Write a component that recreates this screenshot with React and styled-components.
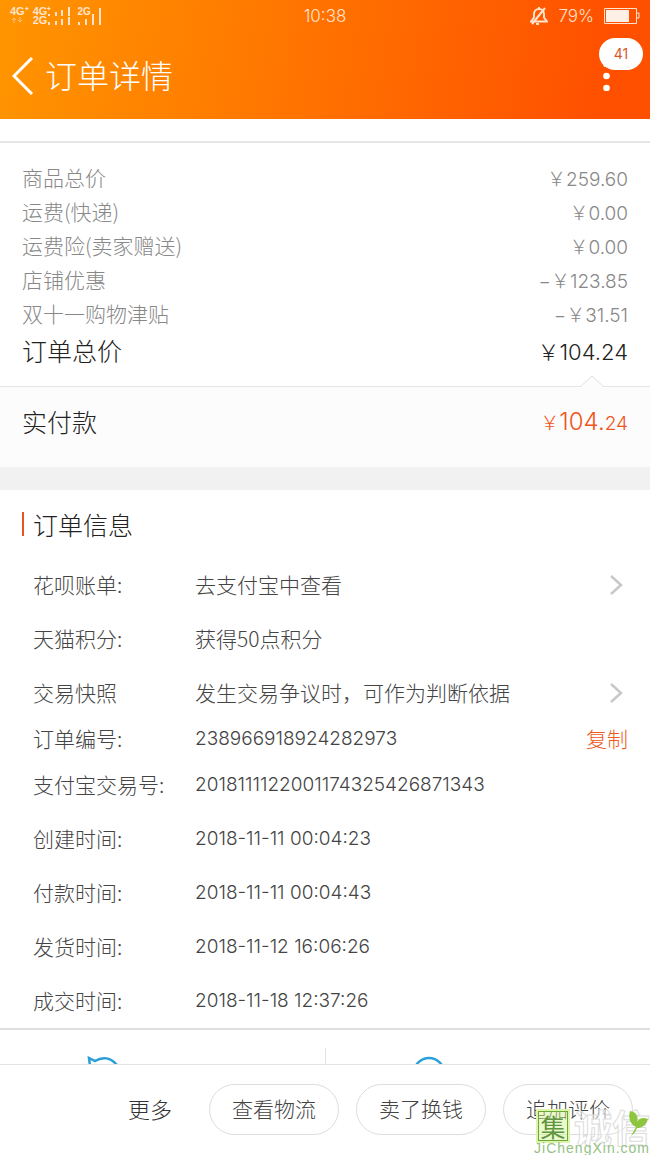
import React from "react";
import styled, { createGlobalStyle } from "styled-components";

const GlobalStyle = createGlobalStyle`
  body {
    margin: 0;
    background-color: #fff;
    font-family: "Noto Sans CJK SC", "Noto Sans", sans-serif;
    font-weight: 300;
    color: #444;
  }
  button {
    font-family: inherit;
    font-weight: inherit;
    cursor: pointer;
  }
`;

const digits = `Inter, "Noto Sans CJK SC", sans-serif`;

const Page = styled.div`
  display: flex;
  flex-direction: column;
  min-height: 100vh;
`;

const Header = styled.header`
  color: #fff;
  background: linear-gradient(100deg, #ff9500 0%, #ff7a00 38%, #ff5000 92%);
`;

const StatusBar = styled.div`
  display: grid;
  grid-template-columns: 1fr auto 1fr;
  align-items: center;
  height: 32px;
  padding: 0 10px;
  font-family: ${digits};
  font-size: 17px;
  line-height: 20px;
  color: #ffe3cc;
`;

const Signals = styled.div`
  display: flex;
  align-items: center;
  gap: 4px;
  font-family: "Liberation Sans", sans-serif;
  font-size: 11px;
  font-weight: 700;
  line-height: 9px;
`;

const SignalLabel = styled.span`
  display: flex;
  flex-direction: column;
  height: 18px;
  font-size: ${(props) => (props.$small ? "10px" : "11px")};
`;

const SignalBars = styled.svg`
  margin-left: ${(props) => (props.$underLabel ? "-18px" : "-8px")};
`;

const StatusRight = styled.div`
  display: flex;
  align-items: center;
  justify-content: flex-end;
  gap: 10px;
`;

const NavBar = styled.div`
  display: flex;
  align-items: center;
  height: 87px;
  padding: 0 12px;
`;

const IconButton = styled.button`
  display: flex;
  padding: 0;
  border: none;
  background: none;
  color: inherit;
`;

const PageTitle = styled.h1`
  flex: 1;
  margin: 0 0 0 11px;
  padding-bottom: 4px;
  font-size: 32px;
  font-weight: 300;
  line-height: 40px;
`;

const MoreWrapper = styled.div`
  position: relative;
  margin-right: 28px;
`;

const Badge = styled.span`
  position: absolute;
  left: -4px;
  bottom: 21px;
  width: 44px;
  border-radius: 16px;
  background-color: #fff;
  color: #d9582b;
  font-family: ${digits};
  font-size: 14px;
  font-weight: 400;
  line-height: 32px;
  text-align: center;
`;

const Summary = styled.section`
  margin-top: 22px;
  padding: 17px 22px 16px;
  border-top: 2px solid #e6e6e6;
`;

const SummaryRow = styled.div`
  display: flex;
  align-items: center;
  justify-content: space-between;
  height: ${(props) => (props.$total ? "40px" : "34px")};
  font-size: ${(props) => (props.$total ? "25px" : "21px")};
  color: ${(props) => (props.$total ? "#222" : "#888")};
`;

const Amount = styled.span`
  font-family: ${digits};
  font-size: ${(props) => (props.$total ? "22px" : "19px")};
`;

const Payment = styled.section`
  position: relative;
  display: flex;
  align-items: center;
  justify-content: space-between;
  height: 68px;
  padding: 0 22px 12px;
  border-top: 1px solid #e6e6e6;
  background-color: #fcfcfc;
  font-size: 25px;
  color: #222;
`;

const Caret = styled.svg`
  position: absolute;
  top: -12px;
  right: 46px;
`;

const PaidAmount = styled.span`
  font-family: ${digits};
  font-size: 19px;
  color: #f0551d;
`;

const PaidInteger = styled.span`
  font-size: 24px;
`;

const Info = styled.section`
  border-top: 23px solid #f1f1f1;
  border-bottom: 2px solid #dedede;
`;

const InfoTitle = styled.h2`
  display: flex;
  align-items: center;
  height: 68px;
  margin: 0;
  padding: 0 22px;
  font-size: 25px;
  font-weight: 300;
  line-height: 24px;
  color: #222;
`;

const InfoTitleText = styled.span`
  padding-left: 9px;
  border-left: 2px solid #e8541e;
`;

const InfoRow = styled.div`
  display: grid;
  grid-template-columns: 162px 1fr auto;
  align-items: center;
  box-sizing: border-box;
  height: ${(props) => (props.$compact ? "38px" : "54px")};
  padding: 0 22px 2px 33px;
  font-size: 21px;
`;

const InfoValue = styled.span`
  font-family: ${(props) => (props.$numeric ? digits : "inherit")};
  font-size: ${(props) => (props.$numeric ? "19px" : "21px")};
`;

const LinkButton = styled(IconButton)`
  margin-right: 5px;
  padding-top: 2px;
  color: #c8c8c8;
`;

const CopyButton = styled(IconButton)`
  font-size: 21px;
  color: #ee5a1c;
`;

const Contacts = styled.section`
  display: grid;
  grid-template-columns: 1fr 1fr;
  height: 34px;
  overflow: hidden;
`;

const Contact = styled.div`
  display: flex;
  padding: 26px 0 0 87px;
`;

const ContactRight = styled(Contact)`
  margin-top: 18px;
  padding-top: 8px;
  border-left: 1px solid #e3e3e3;
`;

const Footer = styled.footer`
  position: relative;
  display: flex;
  align-items: center;
  justify-content: flex-end;
  gap: 17px;
  height: 88px;
  padding: 0 17px 2px;
  border-top: 1px solid #e3e3e3;
`;

const MoreButton = styled(IconButton)`
  margin-right: 20px;
  padding-bottom: 3px;
  font-size: 22px;
  color: #333;
`;

const PillButton = styled.button`
  width: 130px;
  height: 51px;
  padding: 0 0 3px;
  border: 1px solid #ddd;
  border-radius: 26px;
  background-color: #fff;
  font-size: 21px;
  color: #444;
`;

const Watermark = styled.div`
  position: absolute;
  right: 0;
  bottom: 0;
  display: flex;
  flex-direction: column;
  align-items: flex-end;
  pointer-events: none;
`;

const WatermarkMarks = styled.div`
  display: flex;
  align-items: center;
  gap: 6px;
  font-size: 38px;
  line-height: 30px;
  color: rgba(255, 255, 255, 0.5);
  font-weight: 700;
  -webkit-text-stroke: 1px #dcdcdc;
`;

const WatermarkSeal = styled.span`
  width: 28px;
  border: 1px solid #6fa53c;
  outline: 2px solid #dcf5a8;
  background-color: rgba(214, 243, 150, 0.5);
  font-size: 25px;
  font-weight: 400;
  line-height: 28px;
  text-align: center;
  -webkit-text-stroke: 0;
  color: #5f9440;
`;

const WatermarkLeaf = styled.svg`
  position: absolute;
  top: 0;
  right: 2px;
`;

const WatermarkUrl = styled.span`
  font-family: "Liberation Sans", sans-serif;
  font-size: 14px;
  font-weight: 400;
  line-height: 14px;
  letter-spacing: 1px;
  color: #96c183;
`;

const summary = [
  { label: "商品总价", amount: "￥259.60" },
  { label: "运费(快递)", amount: "￥0.00" },
  { label: "运费险(卖家赠送)", amount: "￥0.00" },
  { label: "店铺优惠", amount: "−￥123.85" },
  { label: "双十一购物津贴", amount: "−￥31.51" },
  { label: "订单总价", amount: "￥104.24", total: true },
];

const info = [
  { label: "花呗账单:", value: "去支付宝中查看", link: true },
  { label: "天猫积分:", value: "获得50点积分" },
  { label: "交易快照", value: "发生交易争议时，可作为判断依据", link: true },
  { label: "订单编号:", value: "238966918924282973", numeric: true, copy: true },
  { label: "支付宝交易号:", value: "2018111122001174325426871343", numeric: true },
  { label: "创建时间:", value: "2018-11-11 00:04:23", numeric: true },
  { label: "付款时间:", value: "2018-11-11 00:04:43", numeric: true },
  { label: "发货时间:", value: "2018-11-12 16:06:26", numeric: true },
  { label: "成交时间:", value: "2018-11-18 12:37:26", numeric: true },
];

const actions = ["查看物流", "卖了换钱", "追加评价"];

const SignalIcons = () => (
  <Signals>
    <SignalLabel>
      4G⁺
      <svg width="16" height="8" fill="none" stroke="#ffc48a">
        <path d="M4 7V2M2 4l2-2 2 2M10 1v5M8 4l2 2 2-2" />
      </svg>
    </SignalLabel>
    <SignalLabel>
      <span>4G⁺</span>
      <span>2G</span>
    </SignalLabel>
    <SignalBars width="26" height="18" fill="currentColor">
      <path d="M1 7h2v2H1zM8 5h2v4H8zM14 3h2v6h-2zM21 0h2v9h-2zM1 15h2v3H1zM8 14h2v4H8zM14 12h2v6h-2zM21 10h2v8h-2z" />
    </SignalBars>
    <SignalLabel $small>2G</SignalLabel>
    <SignalBars $underLabel width="26" height="18" fill="currentColor">
      <path d="M1 15h2v3H1zM8 12h2v6H8zM15 7h2v11h-2zM22 1h2v17h-2z" />
    </SignalBars>
  </Signals>
);

const ChevronRight = () => (
  <svg width="13" height="20" fill="none" stroke="currentColor" strokeWidth="2.5">
    <path d="M1 1l10 9-10 9" />
  </svg>
);

const App = () => (
  <>
    <GlobalStyle />
    <Page>
      <Header>
        <StatusBar>
          <SignalIcons />
          <span>10:38</span>
          <StatusRight>
            <svg width="18" height="18" fill="none" stroke="currentColor" strokeWidth="2">
              <path d="M1 14.5h16l-3-4V7a5 5 0 0 0-10 0v3.5zM9 2V0M6 17h3M15 1L2 17" />
            </svg>
            <span>79%</span>
            <svg width="36" height="16">
              <path d="M.5.5h32v15H.5zM33 5h2v5h-2" fill="none" stroke="currentColor" />
              <path d="M2 2h23v12H2z" fill="#fff0e6" />
            </svg>
          </StatusRight>
        </StatusBar>
        <NavBar>
          <IconButton aria-label="返回">
            <svg width="22" height="38" fill="none" stroke="currentColor" strokeWidth="3">
              <path d="M20 1L2 19l18 18" />
            </svg>
          </IconButton>
          <PageTitle>订单详情</PageTitle>
          <MoreWrapper>
            <IconButton aria-label="更多选项">
              <svg width="7" height="31" fill="currentColor">
                <circle cx="3.5" cy="4" r="3.3" />
                <circle cx="3.5" cy="16" r="3.3" />
                <circle cx="3.5" cy="28" r="3.3" />
              </svg>
            </IconButton>
            <Badge>41</Badge>
          </MoreWrapper>
        </NavBar>
      </Header>
      <Summary>
        {summary.map(({ label, amount, total }) => (
          <SummaryRow key={label} $total={total}>
            <span>{label}</span>
            <Amount $total={total}>{amount}</Amount>
          </SummaryRow>
        ))}
      </Summary>
      <Payment>
        <Caret width="24" height="13" fill="#fcfcfc" stroke="#dedede">
          <path d="M0 12L12 1l12 11" />
        </Caret>
        <span>实付款</span>
        <PaidAmount>
          ￥<PaidInteger>104.</PaidInteger>24
        </PaidAmount>
      </Payment>
      <Info>
        <InfoTitle>
          <InfoTitleText>订单信息</InfoTitleText>
        </InfoTitle>
        {info.map(({ label, value, numeric, link, copy }) => (
          <InfoRow key={label} $compact={copy}>
            <span>{label}</span>
            <InfoValue $numeric={numeric}>{value}</InfoValue>
            {link && (
              <LinkButton aria-label={value}>
                <ChevronRight />
              </LinkButton>
            )}
            {copy && <CopyButton>复制</CopyButton>}
          </InfoRow>
        ))}
      </Info>
      <Contacts>
        <Contact>
          <svg width="34" height="34" fill="none" stroke="#2a9fd8" strokeWidth="2.5">
            <path d="M3 10L2 2l6 3C16 0 24 2 29 8c5 8 0 22-13 22" />
          </svg>
        </Contact>
        <ContactRight>
          <svg width="34" height="34" fill="none" stroke="#2a9fd8" strokeWidth="2.5">
            <circle cx="16" cy="17" r="15" />
          </svg>
        </ContactRight>
      </Contacts>
      <Footer>
        <MoreButton>更多</MoreButton>
        {actions.map((action) => (
          <PillButton key={action}>{action}</PillButton>
        ))}
        <Watermark>
          <WatermarkMarks>
            <WatermarkSeal>集</WatermarkSeal>
            <span>诚信</span>
          </WatermarkMarks>
          <WatermarkLeaf width="20" height="26" fill="#8cc63f">
            <path d="M2 0c6 1 9 5 7 11 2-4 6-5 11-3-2 7-7 9-11 9-1 3-3 6-6 8l5-9C2 13 0 7 2 0z" />
          </WatermarkLeaf>
          <WatermarkUrl>JiChengXin.com</WatermarkUrl>
        </Watermark>
      </Footer>
    </Page>
  </>
);

export default App;
